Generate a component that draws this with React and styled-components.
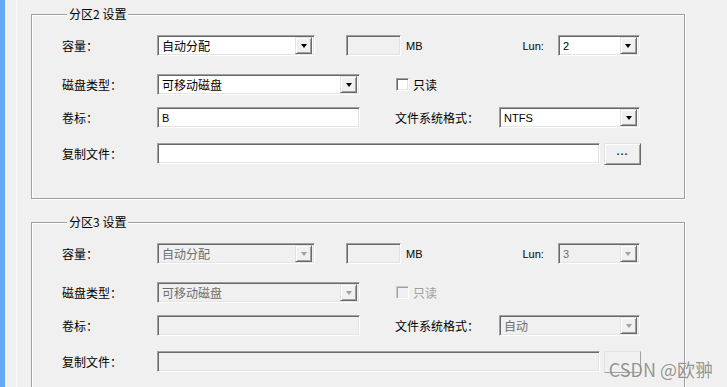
import styled, { createGlobalStyle, css } from 'styled-components';

const GlobalStyle = createGlobalStyle`
  html, body {
    margin: 0;
    padding: 0;
    background: #f0f0f0;
  }
  body {
    font-family: "Noto Sans CJK SC", "Liberation Sans", sans-serif;
    font-size: 12px;
    color: #000;
    overflow: hidden;
  }
`;

const Window = styled.div`
  position: relative;
  display: flex;
  width: 727px;
  height: 387px;
  background: #f0f0f0;
  overflow: hidden;
`;

const SideBar = styled.div`
  flex: none;
  width: 5px;
  background: #66a8f2;
`;

const Gutter = styled.div`
  flex: none;
  width: 11px;
  border-right: 1px solid #fbfbfb;
`;

const Content = styled.div`
  display: flex;
  flex-direction: column;
  gap: 16px;
  padding: 7px 0 0 14px;
`;

const Group = styled.fieldset`
  box-sizing: border-box;
  width: 654px;
  height: 192px;
  flex: none;
  margin: 0;
  padding: 14px 0 0 30px;
  border: 1px solid #a0a0a0;
  box-shadow: inset 1px 1px 0 #fff, 1px 1px 0 #fff;
  min-inline-size: 0;
`;

const Title = styled.legend`
  margin-left: 5px;
  padding: 0 2px;
  line-height: 14px;
  font-size: 12px;
  background: #f0f0f0;
`;

const Row = styled.div`
  display: flex;
  align-items: center;
  height: 21px;
  margin-top: ${(p) => p.$mt || 0}px;
`;

const Label = styled.span`
  flex: none;
  width: ${(p) => p.$w || 95}px;
  margin-left: ${(p) => p.$ml || 0}px;
  white-space: nowrap;
  line-height: 14px;
`;

const LatinText = styled.span`
  flex: none;
  margin-left: ${(p) => p.$ml || 0}px;
  font-family: "Liberation Sans", sans-serif;
  font-size: 11px;
  color: ${(p) => (p.$muted ? '#a0a0a0' : '#000')};
`;

const sunken = css`
  box-sizing: border-box;
  border: 1px solid;
  border-color: #a0a0a0 #fff #fff #a0a0a0;
  box-shadow: inset 1px 1px 0 #696969, inset -1px -1px 0 #e3e3e3;
`;

const raised = css`
  box-sizing: border-box;
  border: 1px solid;
  border-color: #e3e3e3 #696969 #696969 #e3e3e3;
  box-shadow: inset 1px 1px 0 #fff, inset -1px -1px 0 #a0a0a0;
  background: #f0f0f0;
`;

const Combo = styled.div`
  ${sunken};
  flex: none;
  display: flex;
  align-items: center;
  width: ${(p) => p.$w}px;
  height: 21px;
  margin-left: ${(p) => p.$ml || 0}px;
  padding: 2px;
  background: ${(p) => (p.$disabled ? '#f0f0f0' : '#fff')};
  color: ${(p) => (p.$disabled ? '#6d6d6d' : '#000')};
`;

const ComboText = styled.span`
  flex: 1;
  padding-left: 2px;
  line-height: 14px;
  white-space: nowrap;
  font-family: ${(p) => (p.$latin ? '"Liberation Sans", sans-serif' : 'inherit')};
  font-size: ${(p) => (p.$latin ? '11px' : '12px')};
`;

const DropButton = styled.div`
  ${raised};
  flex: none;
  display: flex;
  align-items: center;
  justify-content: center;
  width: 17px;
  height: 17px;

  &::after {
    content: '';
    border-left: 3.5px solid transparent;
    border-right: 3.5px solid transparent;
    border-top: 4px solid ${(p) => (p.$disabled ? '#a0a0a0' : '#000')};
    margin-top: 1px;
  }
`;

const Edit = styled.div`
  ${sunken};
  flex: none;
  display: flex;
  align-items: center;
  width: ${(p) => p.$w}px;
  height: ${(p) => p.$h || 21}px;
  margin-left: ${(p) => p.$ml || 0}px;
  padding: 0 4px;
  background: ${(p) => (p.$disabled ? '#f0f0f0' : '#fff')};
  font-family: "Liberation Sans", sans-serif;
  font-size: 11px;
`;

const CheckBox = styled.span`
  ${sunken};
  flex: none;
  width: 13px;
  height: 13px;
  margin-left: ${(p) => p.$ml || 0}px;
  background: ${(p) => (p.$disabled ? '#f0f0f0' : '#fff')};
  ${(p) =>
    p.$disabled &&
    css`
      border-color: #c8c8c8 #fff #fff #c8c8c8;
      box-shadow: inset 1px 1px 0 #a0a0a0;
    `}
`;

const CheckLabel = styled.span`
  margin-left: 4px;
  line-height: 14px;
  color: ${(p) => (p.$disabled ? '#a0a0a0' : '#000')};
`;

const BrowseButton = styled.button`
  ${raised};
  flex: none;
  width: 37px;
  height: 22px;
  margin-left: 4px;
  padding: 0 0 5px;
  font-family: "Liberation Sans", sans-serif;
  font-weight: bold;
  font-size: 11px;
  letter-spacing: 1px;
  color: #1d3d6b;
  ${(p) =>
    p.$disabled &&
    css`
      color: transparent;
      border-color: #e3e3e3 #a0a0a0 #a0a0a0 #e3e3e3;
      box-shadow: none;
    `}
`;

const Watermark = styled.div`
  position: absolute;
  right: 14px;
  bottom: 7px;
  font-family: "Noto Sans CJK SC", "Liberation Sans", sans-serif;
  font-size: 18px;
  line-height: 21px;
  color: rgba(105, 105, 105, 0.72);
  text-shadow: 0 0 1px rgba(255, 255, 255, 0.8);
  pointer-events: none;
`;

function DropDown({ width, ml, value, latin, disabled }) {
  return (
    <Combo $w={width} $ml={ml} $disabled={disabled}>
      <ComboText $latin={latin}>{value}</ComboText>
      <DropButton $disabled={disabled} />
    </Combo>
  );
}

function PartitionGroup({ index, lun, fs, fsLatin, volume, disabled }) {
  return (
    <Group>
      <Title>分区{index} 设置</Title>

      <Row>
        <Label>容量：</Label>
        <DropDown width={158} value="自动分配" disabled={disabled} />
        <Edit $w={55} $ml={31} $disabled />
        <LatinText $ml={5}>MB</LatinText>
        <LatinText $ml={100}>Lun:</LatinText>
        <DropDown width={82} ml={14} value={lun} latin disabled={disabled} />
      </Row>

      <Row $mt={18}>
        <Label>磁盘类型：</Label>
        <DropDown width={203} value="可移动磁盘" disabled={disabled} />
        <CheckBox $ml={36} $disabled={disabled} />
        <CheckLabel $disabled={disabled}>只读</CheckLabel>
      </Row>

      <Row $mt={12}>
        <Label>卷标：</Label>
        <Edit $w={203} $disabled={disabled}>{volume}</Edit>
        <Label $w={104} $ml={35}>文件系统格式：</Label>
        <DropDown width={141} value={fs} latin={fsLatin} disabled={disabled} />
      </Row>

      <Row $mt={15}>
        <Label>复制文件：</Label>
        <Edit $w={443} $disabled={disabled} />
        <BrowseButton $disabled={disabled} aria-label="浏览">...</BrowseButton>
      </Row>
    </Group>
  );
}

export default function App() {
  return (
    <Window>
      <GlobalStyle />
      <SideBar />
      <Gutter />
      <Content>
        <PartitionGroup index={2} lun="2" fs="NTFS" fsLatin volume="B" />
        <PartitionGroup index={3} lun="3" fs="自动" volume="" disabled />
      </Content>
      <Watermark>CSDN @欧翀</Watermark>
    </Window>
  );
}
